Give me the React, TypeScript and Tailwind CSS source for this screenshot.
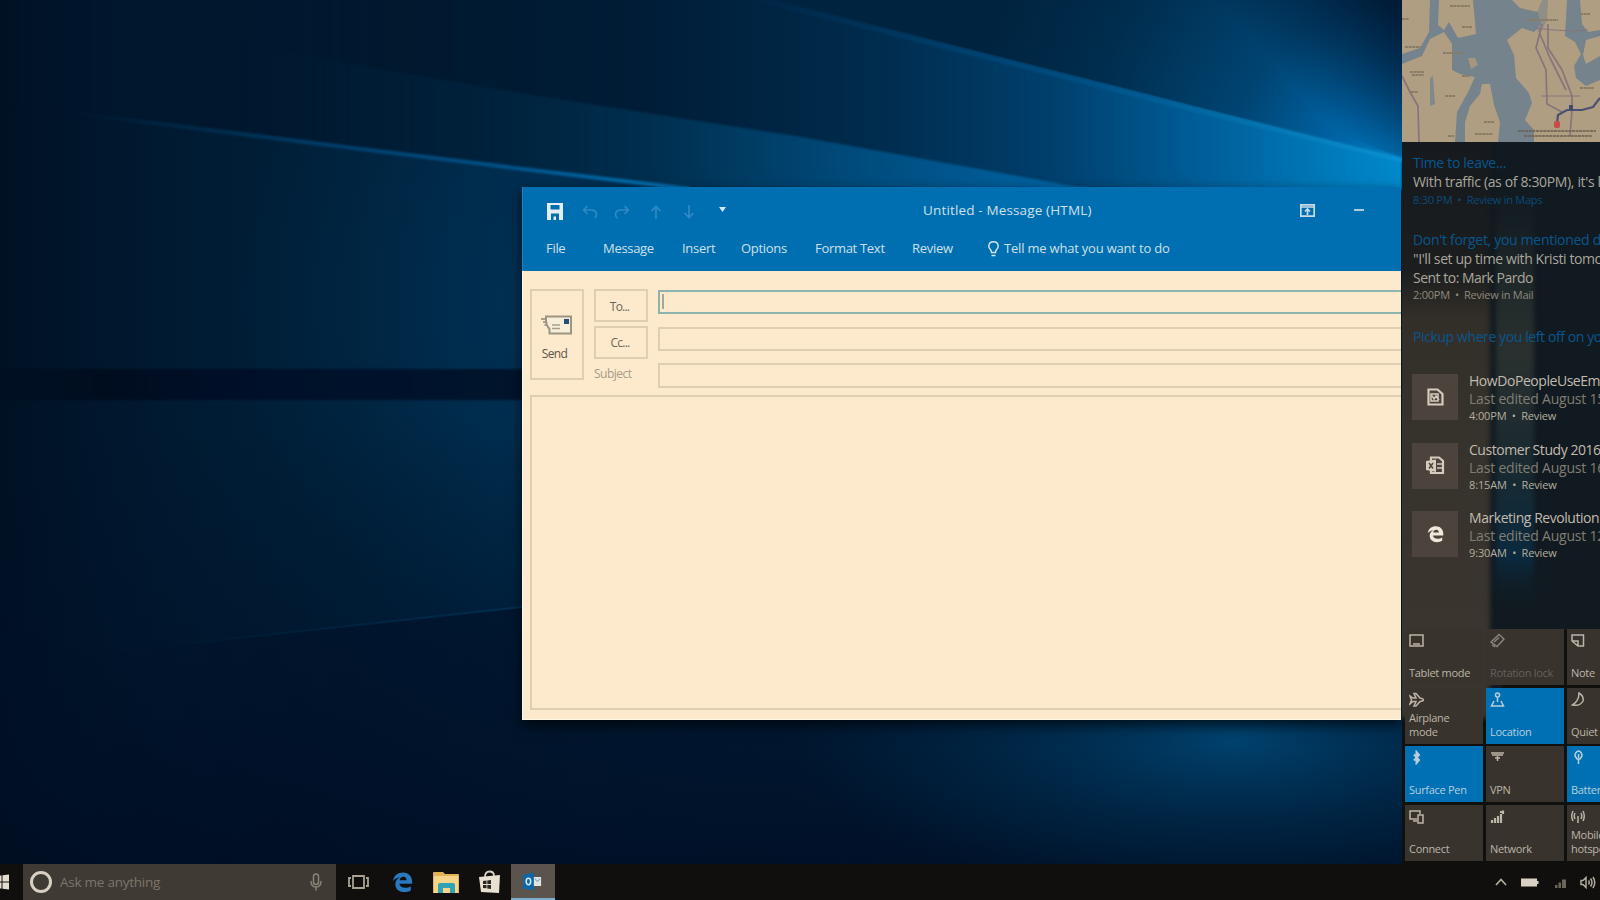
import React from 'react';
import clsx from 'clsx';

type IconProps = { className?: string };

const Wallpaper = () => (
  <svg className="absolute inset-0" width="1600" height="900" viewBox="0 0 1600 900">
    <defs>
      <linearGradient id="base" x1="0" x2="1" y1="0" y2="0">
        <stop offset="0" stopColor="#001124" />
        <stop offset="0.1" stopColor="#001a31" />
        <stop offset="0.22" stopColor="#00213b" />
        <stop offset="0.34" stopColor="#002a4a" />
        <stop offset="1" stopColor="#00213e" />
      </linearGradient>
      <radialGradient id="midGlow" gradientUnits="userSpaceOnUse" cx="560" cy="300" r="330">
        <stop offset="0" stopColor="#003c66" stopOpacity="0.4" />
        <stop offset="1" stopColor="#003c66" stopOpacity="0" />
      </radialGradient>
      <linearGradient id="upper" gradientUnits="userSpaceOnUse" x1="0" x2="1400" y1="0" y2="0">
        <stop offset="0" stopColor="#00162b" stopOpacity="0" />
        <stop offset="0.15" stopColor="#00172d" stopOpacity="0.8" />
        <stop offset="0.28" stopColor="#00192f" />
        <stop offset="0.45" stopColor="#001c36" />
        <stop offset="0.62" stopColor="#002b4c" />
        <stop offset="0.75" stopColor="#003f6c" />
        <stop offset="0.86" stopColor="#005e99" />
        <stop offset="1" stopColor="#0089cc" />
      </linearGradient>
      <linearGradient id="lower" gradientUnits="userSpaceOnUse" x1="240" x2="1080" y1="0" y2="0">
        <stop offset="0" stopColor="#001e38" stopOpacity="0" />
        <stop offset="0.3" stopColor="#00233d" stopOpacity="0.9" />
        <stop offset="0.5" stopColor="#003050" />
        <stop offset="0.72" stopColor="#004a7a" />
        <stop offset="1" stopColor="#0065a6" />
      </linearGradient>
      <radialGradient id="corner" gradientUnits="userSpaceOnUse" cx="1400" cy="175" r="430">
        <stop offset="0" stopColor="#007cc4" />
        <stop offset="0.18" stopColor="#0062a3" />
        <stop offset="0.4" stopColor="#004472" />
        <stop offset="0.75" stopColor="#002c4c" />
        <stop offset="1" stopColor="#002440" />
      </radialGradient>
      <linearGradient id="cornerShade" gradientUnits="userSpaceOnUse" x1="1310" y1="100" x2="1400" y2="15">
        <stop offset="0" stopColor="#001a35" stopOpacity="0" />
        <stop offset="1" stopColor="#001a35" stopOpacity="0.95" />
      </linearGradient>
      <linearGradient id="beamA" gradientUnits="userSpaceOnUse" x1="760" x2="1402" y1="0" y2="160">
        <stop offset="0" stopColor="#003a66" stopOpacity="0.1" />
        <stop offset="0.5" stopColor="#005084" stopOpacity="0.9" />
        <stop offset="1" stopColor="#0992d4" />
      </linearGradient>
      <linearGradient id="beamB" gradientUnits="userSpaceOnUse" x1="60" x2="690" y1="110" y2="190">
        <stop offset="0" stopColor="#003052" stopOpacity="0" />
        <stop offset="0.4" stopColor="#003c66" />
        <stop offset="0.7" stopColor="#005288" />
        <stop offset="1" stopColor="#0078ba" />
      </linearGradient>
      <linearGradient id="band" gradientUnits="userSpaceOnUse" x1="0" x2="530" y1="0" y2="0">
        <stop offset="0" stopColor="#000d1e" stopOpacity="0.3" />
        <stop offset="0.2" stopColor="#000c1e" stopOpacity="0.9" />
        <stop offset="0.5" stopColor="#00102a" />
        <stop offset="1" stopColor="#00152d" />
      </linearGradient>
      <linearGradient id="floor" gradientUnits="userSpaceOnUse" x1="0" x2="0" y1="420" y2="864">
        <stop offset="0" stopColor="#001026" stopOpacity="0" />
        <stop offset="0.6" stopColor="#000f25" stopOpacity="0.5" />
        <stop offset="1" stopColor="#000d22" stopOpacity="0.85" />
      </linearGradient>
      <linearGradient id="ray" gradientUnits="userSpaceOnUse" x1="150" x2="522" y1="0" y2="0">
        <stop offset="0" stopColor="#00304f" stopOpacity="0" />
        <stop offset="1" stopColor="#003358" stopOpacity="0.8" />
      </linearGradient>
      <linearGradient id="underRay" gradientUnits="userSpaceOnUse" x1="60" x2="1100" y1="0" y2="0">
        <stop offset="0" stopColor="#000c22" stopOpacity="0" />
        <stop offset="0.22" stopColor="#000d24" stopOpacity="0.4" />
        <stop offset="0.44" stopColor="#001026" stopOpacity="0.55" />
        <stop offset="1" stopColor="#001026" stopOpacity="0" />
      </linearGradient>
      <radialGradient id="bottomGlow">
        <stop offset="0" stopColor="#004a7a" stopOpacity="0.85" />
        <stop offset="0.45" stopColor="#003a62" stopOpacity="0.5" />
        <stop offset="1" stopColor="#003156" stopOpacity="0" />
      </radialGradient>
      <filter id="soft" x="-5%" y="-20%" width="110%" height="140%" colorInterpolationFilters="sRGB">
        <feGaussianBlur stdDeviation="1.3" />
      </filter>
    </defs>
    <rect width="1600" height="900" fill="url(#base)" />
    <rect width="1600" height="900" fill="url(#midGlow)" />
    <path d="M-10 -10H740L780 0L1402 158V190H690L523 169L353 148L153 123L-10 105Z" fill="url(#upper)" filter="url(#soft)" />
    <path d="M240 42L330 60L520 93L802 137L1084 188H690L523 169L353 148L240 133Z" fill="url(#lower)" filter="url(#soft)" />
    <path d="M775 0H1402V158Z" fill="url(#corner)" />
    <path d="M1000 0H1402V158Z" fill="url(#cornerShade)" />
    <g filter="url(#soft)" fill="none">
      <path d="M760 0L971 53L1196 110L1402 160" stroke="url(#beamA)" strokeWidth="5" />
      <path d="M60 112L153 123L353 148L523 169L690 189" stroke="url(#beamB)" strokeWidth="4" />
    </g>
    <rect x="-10" y="369" width="560" height="31" fill="url(#band)" filter="url(#soft)" />
    <rect y="420" width="1600" height="480" fill="url(#floor)" />
    <path d="M60 660L150 648L522 607L1100 560V900H60Z" fill="url(#underRay)" />
    <path d="M150 648L522 607" stroke="url(#ray)" strokeWidth="2" />
    <ellipse cx="1235" cy="740" rx="440" ry="165" fill="url(#bottomGlow)" />
  </svg>
);

const SaveIcon = () => (
  <svg width="16" height="17" viewBox="0 0 16 17" fill="#e4eef0">
    <path fillRule="evenodd" d="M0 0H16V17H0ZM3.5 2V6.5H12.5V2ZM4 10.5V17H6.5V13.5H9V17H12V10.5Z" />
  </svg>
);

const UndoIcon = ({ className }: IconProps) => (
  <svg className={className} width="16" height="14" viewBox="0 0 16 14" fill="none" stroke="#2f8ac3" strokeWidth="1.6">
    <path d="M5.5 1L1.5 5L5.5 9M2 5H10Q14.5 5.5 14.5 9.5Q14.5 12 12.5 13" />
  </svg>
);

const ArrowIcon = ({ className }: IconProps) => (
  <svg className={className} width="12" height="14" viewBox="0 0 12 14" fill="none" stroke="#2f8ac3" strokeWidth="1.7">
    <path d="M6 14V1.5M1.5 6L6 1.5L10.5 6" />
  </svg>
);

const RibbonIcon = () => (
  <svg width="15" height="13" viewBox="0 0 15 13" fill="none" stroke="#c9dde6" strokeWidth="1.7">
    <path d="M.8 .8H14.2V12.2H.8ZM.8 3H14.2M7.5 11V5.5M5 7.5L7.5 5L10 7.5" />
  </svg>
);

const BulbIcon = () => (
  <svg width="11" height="16" viewBox="0 0 11 16" fill="none" stroke="#d3e2e8" strokeWidth="1.5">
    <path d="M3.5 11.5Q3.5 9.5 2 8Q.8 6.8 .8 5.2Q1 .8 5.5 .8Q10 .8 10.2 5.2Q10.2 6.8 9 8Q7.5 9.5 7.5 11.5ZM3.5 14.5H7.5" />
  </svg>
);

const SendIcon = () => (
  <svg width="31" height="20" viewBox="0 0 31 20" fill="none">
    <path d="M5 4H0M6 7H2M7 10H3.5" stroke="#8f8775" strokeWidth="1.5" />
    <path d="M5 1.5H30V18.5H8.5V14Q5 10 5 6Z" fill="#f7eeda" stroke="#9d9582" strokeWidth="2" />
    <path d="M23 4H28V9H23Z" fill="#1f4f78" />
    <path d="M11 10H19M11 13.5H19" stroke="#a69e8b" strokeWidth="1.3" />
  </svg>
);

const ribbonTabs = [
  { label: 'File', className: 'ml-[23px] w-[57px]' },
  { label: 'Message', className: 'w-[79px]' },
  { label: 'Insert', className: 'w-[59px]' },
  { label: 'Options', className: 'w-[74px]' },
  { label: 'Format Text', className: 'w-[97px]' },
  { label: 'Review', className: 'w-[76px]' },
];

const MessageWindow = () => (
  <div className="absolute left-[522px] top-[187px] w-[879px] h-[533px] flex flex-col bg-[#fdeacd] shadow-[0_5px_12px_rgba(0,0,0,0.7)] overflow-hidden">
    <header className="h-[84px] shrink-0 bg-[#006fb1] text-[#cfe0e8] text-[13px] border-l border-[#1b80bb]">
      <div className="h-[46px] flex items-center">
        <div className="flex items-center w-[400px] pl-[24px] pt-[3px]">
          <SaveIcon />
          <UndoIcon className="ml-[19px]" />
          <UndoIcon className="ml-[16px] -scale-x-100" />
          <ArrowIcon className="ml-[20px]" />
          <ArrowIcon className="ml-[21px] rotate-180" />
          <svg className="ml-[24px] mb-[4px]" width="7" height="5" viewBox="0 0 7 5" fill="#d9e6ea">
            <path d="M0 0H7L3.5 5Z" />
          </svg>
        </div>
        <div className="w-[377px] text-[13.5px] pt-px tracking-[0.15px] whitespace-nowrap">Untitled - Message (HTML)</div>
        <div className="flex items-center">
          <RibbonIcon />
          <div className="ml-[39px] w-[10px] h-[2px] bg-[#a9cbdc]" />
        </div>
      </div>
      <nav className="h-[32px] flex items-center whitespace-nowrap">
        {ribbonTabs.map((tab) => (
          <span key={tab.label} className={clsx('shrink-0 tracking-[-0.3px]', tab.className)}>
            {tab.label}
          </span>
        ))}
        <BulbIcon />
        <span className="ml-[5px] tracking-[-0.2px]">Tell me what you want to do</span>
      </nav>
    </header>

    <div className="flex-1 flex flex-col pl-[7px] pt-[18px] pb-[9px] border-l border-b border-[#fff6e4]">
      <div className="flex h-[91px] shrink-0">
        <button className="w-[54px] border-2 border-[#dfceb2] flex flex-col items-center text-[12px] text-[#5b5549]">
          <span className="mt-[24px] mr-[2px]"><SendIcon /></span>
          <span className="mt-[10px] mr-[5px] leading-[18px] tracking-[-0.6px]">Send</span>
        </button>
        <div className="ml-[10px] w-[54px] flex flex-col text-[12px]">
          <button className="h-[33px] shrink-0 border-2 border-[#dfceb2] text-[#6b6558] tracking-[-0.8px] pt-[2px] pr-[3px]">To...</button>
          <button className="mt-[4px] h-[33px] shrink-0 border-2 border-[#dfceb2] text-[#6b6558] tracking-[-0.8px] pt-px pr-[2px]">Cc...</button>
          <span className="mt-[6px] shrink-0 leading-[18px] text-[#a69c88] tracking-[-0.5px]">Subject</span>
        </div>
        <div className="ml-[10px] flex-1 flex flex-col">
          <div className="mt-px h-[24px] shrink-0 border-2 border-r-0 border-[#8db3ae] p-[2px]">
            <div className="w-[2px] h-[15px] bg-[#a7a796]" />
          </div>
          <div className="mt-[13px] h-[24px] shrink-0 border-2 border-r-0 border-[#dfceb2]" />
          <div className="mt-[12px] h-[25px] shrink-0 border-2 border-r-0 border-[#dfceb2]" />
        </div>
      </div>
      <div className="mt-[15px] flex-1 border-2 border-r-0 border-[#dfceb2]" />
    </div>
  </div>
);

const RouteMap = () => (
  <svg className="shrink-0" width="198" height="142" viewBox="0 0 198 142">
    <rect width="198" height="142" fill="#b09e83" />
    <g fill="#75838c">
      <path d="M71 0H110L118 8L136 12L139 24L132 32L120 28L105 40L112 55L114 78L127 93L130 103L123 120L132 130V142H96L98 122L92 105L88 84L80 84L78 94L68 106L63 122V142H53L55 112L66 92L73 77L58 74L50 70L50 44L42 32L28 39L20 56L0 64V54L18 48L27 32L28 0H37L36 25L42 30L47 22L56 38L74 34Z" />
      <path d="M66 58L73 58L76 65L69 69Z" fill="#a39780" />
      <path d="M165 0H178L180 24L186 32L198 30V36L184 40L181 55L184 64L198 56V80L184 86L174 78L172 66L179 54L173 42L163 36Z" />
      <path d="M28 78L31 76L33 104L28 106Z" opacity="0.8" />
      <path d="M140 0H146L145 20L138 34L130 24Z" opacity="0.55" />
    </g>
    <g fill="none" stroke="#88747a" strokeWidth="1.7">
      <path d="M0 76L8 92L16 106L17 142" />
      <path d="M140 24L134 48L144 70L145 104L160 112" />
      <path d="M146 24L146 48L160 70L170 96L170 110L168 136" />
      <path d="M138 34L148 58L164 90" />
      <path d="M132 28L152 30L172 31L186 30M139 96H178" strokeWidth="1" />
    </g>
    <path d="M155 123L156 115L165 110L180 110L191 107L198 98" fill="none" stroke="#4c5173" strokeWidth="2.2" />
    <rect x="167" y="105" width="4" height="5" fill="#454a6c" />
    <rect x="152" y="121" width="6" height="7" rx="2" fill="#c84b45" />
    <g stroke="#8a7b65" strokeWidth="2" strokeDasharray="3 0.6">
      <path d="M48 6H68M60 27H70M3 47H19M41 53H60M60 76H68M8 72H22M10 75H22M9 92H16M43 96H53M82 122H92M73 134H91M126 20H156M178 14H188M46 136H52M178 88H192M0 19H7" />
      <path d="M116 131H194M122 136H190" stroke="#6b5e4e" strokeWidth="1.5" />
    </g>
  </svg>
);

const PanelBackdrop = () => (
  <svg className="absolute inset-0" width="198" height="864" viewBox="0 0 198 864">
    <defs>
      <linearGradient id="strip" x1="0" x2="0" y1="0" y2="1">
        <stop offset="0" stopColor="#161f24" stopOpacity="0" />
        <stop offset="0.2" stopColor="#1c2628" />
        <stop offset="0.4" stopColor="#2a302f" />
        <stop offset="0.65" stopColor="#1a2a30" />
        <stop offset="0.88" stopColor="#0b2a3e" />
        <stop offset="1" stopColor="#101d26" stopOpacity="0" />
      </linearGradient>
      <linearGradient id="wood" gradientUnits="userSpaceOnUse" x1="0" x2="0" y1="142" y2="630">
        <stop offset="0" stopColor="#161a1e" />
        <stop offset="0.26" stopColor="#1b1d1e" />
        <stop offset="0.36" stopColor="#322e28" />
        <stop offset="0.6" stopColor="#36322c" />
        <stop offset="1" stopColor="#3a352e" />
      </linearGradient>
      <filter id="haze" x="-20%" y="-5%" width="140%" height="110%" colorInterpolationFilters="sRGB">
        <feGaussianBlur stdDeviation="2.5" />
      </filter>
    </defs>
    <rect width="198" height="864" fill="#111a20" />
    <rect y="690" width="198" height="174" fill="#10110f" />
    <rect x="100" y="630" width="98" height="234" fill="#10110f" />
    <rect x="-10" y="130" width="98" height="588" fill="url(#wood)" filter="url(#haze)" />
    <rect x="94" y="175" width="38" height="435" fill="url(#strip)" filter="url(#haze)" />
  </svg>
);

const DocIcon = () => (
  <svg width="17" height="18" viewBox="0 0 17 18" fill="none" stroke="#d5ccbd" strokeWidth="2.2">
    <path d="M1.5 1.5H10.5L15.5 6V16.5H1.5Z" />
    <path d="M4 6H11V13H4ZM5 7.5L7 11L9 8L12 12" strokeWidth="1.5" />
  </svg>
);

const ExcelIcon = () => (
  <svg width="19" height="19" viewBox="0 0 19 19">
    <path d="M5 1.5H13L17 5V17H5Z" fill="none" stroke="#d5ccbd" strokeWidth="2.2" />
    <path d="M0 5L10 3.5V16L0 14Z" fill="#d5ccbd" />
    <path d="M3 7L7 12.5M7 7L3 12.5" stroke="#4d453d" strokeWidth="1.5" />
    <path d="M11 8H16M11 12H16" stroke="#d5ccbd" strokeWidth="1.5" />
  </svg>
);

const EdgeIcon = ({ className }: IconProps) => (
  <svg className={className} viewBox="0 0 24 24" fill="currentColor">
    <path d="M1 11C2 4.5 6.5 1 12.5 1C19 1 23 5.5 23 11.5V14H8.5C8.8 17 11.5 18.7 15 18.7C17.5 18.7 19.8 18 21.5 16.9V21.7C19.5 22.9 17 23.5 14 23.5C7.8 23.5 3.8 19.8 3.8 14.5C3.8 11 5.7 8.2 9 6.7C6 7 3 8.5 1 11ZM8.7 10H16.7C16.7 7.5 15.3 6 12.9 6C10.7 6 9.1 7.5 8.7 10Z" />
  </svg>
);

const recentItems = [
  { title: 'HowDoPeopleUseEmail', edited: 'Last edited August 15', time: '4:00PM', icon: <DocIcon /> },
  { title: 'Customer Study 2016', edited: 'Last edited August 16', time: '8:15AM', icon: <ExcelIcon /> },
  { title: 'Marketing Revolution', edited: 'Last edited August 12', time: '9:30AM', icon: <EdgeIcon className="w-[17px] h-[18px] text-[#efe8da]" /> },
];

const tileIcons: Record<string, React.ReactNode> = {
  tablet: <path d="M1 2H14V13H1ZM4 11H11" />,
  rotation: <path d="M1 9L9 1.5L14 6L7 13.5ZM4 9L9 4.5M5 14L2 12" />,
  note: <path d="M1 2H12.5V13H7L1 8ZM1 8H7V13" />,
  airplane: <path d="M1 4L4 6H7L5 1.5H7L11 6Q14.5 6.5 14.5 8Q14.5 9 11 9.5L7 14H5L7 9.5H4L1 12L2.5 8Z" />,
  location: <path d="M7.5 10V5M5.5 3A2 2 0 1 0 9.5 3A2 2 0 1 0 5.5 3M4 9L1.5 14H13.5L11 9" />,
  quiet: <path d="M8 1Q13 4 12 9Q9 14.5 1.5 13Q8 9 8 1Z" />,
  bluetooth: <path d="M5 4.5L10 10L7.5 13V2L10 5L5 10.5" strokeWidth="2" />,
  vpn: <path d="M1 3H14M2 5H13M5 8H10M7.5 6V11" />,
  battery: <path d="M7.5 1Q11 2 11 6L9 9H6L4 6Q4 2 7.5 1ZM7.5 9V14M7.5 4V8" />,
  connect: <path d="M8 10H1V2H11V5M9 6H14V14H9ZM4 12H8" />,
  network: <path d="M2 14V11M5 14V9M8 14V7M11 14V5M13 1.5V5M10 3H14" strokeWidth="2.2" />,
  hotspot: <path d="M7 7V14M4 4Q2.5 7 4 10M10 4Q11.5 7 10 10M2 2Q-.5 7 2 12M12 2Q14.5 7 12 12" />,
};

const quickActions = [
  { label: 'Tablet mode', icon: 'tablet' },
  { label: 'Rotation lock', icon: 'rotation', muted: true },
  { label: 'Note', icon: 'note' },
  { label: 'Airplane mode', icon: 'airplane', wrap: true },
  { label: 'Location', icon: 'location', active: true },
  { label: 'Quiet hours', icon: 'quiet' },
  { label: 'Surface Pen', icon: 'bluetooth', active: true },
  { label: 'VPN', icon: 'vpn' },
  { label: 'Battery saver', icon: 'battery', active: true },
  { label: 'Connect', icon: 'connect' },
  { label: 'Network', icon: 'network' },
  { label: 'Mobile hotspot', icon: 'hotspot', wrap: true },
];

const ActionCenter = () => (
  <aside className="absolute left-[1402px] top-0 w-[198px] h-[864px] overflow-hidden bg-[#121a20]">
    <PanelBackdrop />
    <div className="relative flex flex-col h-full whitespace-nowrap">
      <RouteMap />
      <div className="pl-[11px] pt-[11px] h-[232px] shrink-0 text-[14px] leading-[19px] text-[#aaa69c]">
        <div className="text-[#09568d] tracking-[-0.3px]">Time to leave...</div>
        <div className="tracking-[-0.35px]">With traffic (as of 8:30PM), it's longer</div>
        <div className="text-[11px] leading-[17px] text-[#0a4a7a] tracking-[-0.25px]">8:30 PM&nbsp; •&nbsp; Review in Maps</div>
        <div className="mt-[22px] text-[#09568d] tracking-[-0.3px]">Don't forget, you mentioned doing</div>
        <div className="tracking-[-0.4px]">"I'll set up time with Kristi tomorrow</div>
        <div className="tracking-[-0.5px]">Sent to: Mark Pardo</div>
        <div className="text-[11px] leading-[16px] text-[#8f897d] tracking-[-0.25px]">2:00PM&nbsp; •&nbsp; Review in Mail</div>
        <div className="mt-[24px] text-[#09568d] tracking-[-0.4px]">Pickup where you left off on your</div>
      </div>
      <div className="pl-[10px] h-[255px] shrink-0 flex flex-col gap-[23px]">
        {recentItems.map((item) => (
          <div key={item.title} className="flex h-[45.5px]">
            <div className="w-[46px] h-[46px] shrink-0 bg-[#4c443c] flex items-center justify-center">{item.icon}</div>
            <div className="ml-[11px] -mt-[3px] text-[14px] leading-[19px]">
              <div className="text-[#c2bbaf] tracking-[-0.45px]">{item.title}</div>
              <div className="text-[#827d73] leading-[18px] tracking-[-0.2px]">{item.edited}</div>
              <div className="text-[11px] leading-[16px] text-[#b5ae9f] tracking-[-0.15px]">{item.time}&nbsp; •&nbsp; Review</div>
            </div>
          </div>
        ))}
      </div>
      <div className="flex-1 w-[260px] px-[3px] grid grid-cols-[78px_78px_78px] auto-rows-[56px] gap-x-[3px] gap-y-[2.5px] content-start">
        {quickActions.map((action) => (
          <div
            key={action.label}
            className={clsx(
              'flex flex-col justify-between pl-[4px] pr-[18px] pt-[4px] pb-[5px] text-[11px] leading-[14px] tracking-[-0.3px]',
              action.active ? 'bg-[#0070b5] text-[#b8cfd8]' : 'bg-[#38332d]',
              action.muted ? 'text-[#67605a]' : !action.active && 'text-[#bdb5a7]',
            )}
          >
            <svg
              className={clsx('shrink-0', action.muted && 'text-[#8b8478]')}
              width="15"
              height="15"
              viewBox="0 0 15 15"
              fill="none"
              stroke="currentColor"
              strokeWidth="1.5"
            >
              {tileIcons[action.icon]}
            </svg>
            <span className={action.wrap ? 'whitespace-normal' : 'whitespace-nowrap'}>{action.label}</span>
          </div>
        ))}
      </div>
    </div>
  </aside>
);

const Taskbar = () => (
  <footer className="absolute left-0 top-[864px] w-[1600px] h-[36px] bg-[#100f0d] flex items-center">
    <svg className="w-[23px] shrink-0" width="23" height="36" viewBox="0 0 23 36" fill="#e3ddd0">
      <path d="M0 11.5H1.5V17.5H0ZM2.5 11.3L9 10.5V17.5H2.5ZM0 18.5H1.5V24.5H0ZM2.5 18.5H9V25.5L2.5 24.7Z" />
    </svg>
    <div className="w-[313px] h-full bg-[#403a34] flex items-center pl-[7px]">
      <div className="w-[22px] h-[22px] rounded-full border-[3px] border-[#d8d0c2]" />
      <span className="ml-[8px] w-[250px] text-[13.5px] tracking-[-0.25px] text-[#7d756a]">Ask me anything</span>
      <svg width="12" height="18" viewBox="0 0 12 18" fill="none" stroke="#8b8377" strokeWidth="1.5">
        <path d="M3.5 3.5Q3.5 1 6 1Q8.5 1 8.5 3.5V9Q8.5 11.5 6 11.5Q3.5 11.5 3.5 9ZM1 8Q1 14 6 14Q11 14 11 8M6 14V17.5" />
      </svg>
    </div>
    <svg className="ml-[12px]" width="21" height="16" viewBox="0 0 21 16" fill="none" stroke="#a9a294" strokeWidth="1.8">
      <path d="M5 2H16V14H5ZM3 4H1V12H3M18 4H20V12H18" />
    </svg>
    <EdgeIcon className="ml-[23px] w-[21px] h-[22px] text-[#2a78bd]" />
    <svg className="ml-[20px]" width="27" height="23" viewBox="0 0 27 23">
      <path d="M0 2Q0 1 1 1H10L12 3H25Q26 3 26 4V22H0Z" fill="#e2b354" />
      <path d="M1 5H25V22H1Z" fill="#f4d58a" />
      <path d="M5 22V14Q5 12 7 12H20Q22 12 22 14V22H17V17H10V22Z" fill="#2fa3b5" />
    </svg>
    <svg className="ml-[19px]" width="22" height="24" viewBox="0 0 22 24">
      <path d="M6 7Q6 1.5 10.5 1.5Q15 1.5 15 6" fill="none" stroke="#d8d1c3" strokeWidth="1.8" />
      <path d="M0 7L21 5L20 23L2 22Z" fill="#e8e1d2" />
      <path d="M4 11L7.5 10.6V14H4ZM8.3 10.5L12 10V14H8.3ZM4 15H7.5V18.3L4 18ZM8.3 15H12V19L8.3 18.5Z" fill="#2a2722" />
    </svg>
    <div className="ml-[10px] w-[44px] h-full bg-[#5a544d] border-b-2 border-[#78aed0] flex items-center justify-center">
      <svg className="mr-px" width="19" height="19" viewBox="0 0 21 20">
        <path d="M11 5H20V15H11Z" fill="#e3e4df" />
        <path d="M13 7L16 10L19 7" fill="none" stroke="#8fb0c6" strokeWidth="1.3" />
        <path d="M0 2.5L12 0V20L0 17.5Z" fill="#0d66a8" />
        <ellipse cx="6" cy="10" rx="2.5" ry="3.5" fill="none" stroke="#dce6ea" strokeWidth="1.7" />
      </svg>
    </div>
    <div className="ml-auto flex items-center">
      <svg width="12" height="8" viewBox="0 0 12 8" fill="none" stroke="#b3ac9f" strokeWidth="1.7">
        <path d="M1 7L6 1.5L11 7" />
      </svg>
      <svg className="ml-[14px]" width="18" height="9" viewBox="0 0 18 9" fill="#d9d2c4">
        <path d="M0 .5H16V8.5H0ZM16 3H17.5V6H16Z" />
      </svg>
      <svg className="ml-[16px]" width="12" height="11" viewBox="0 0 12 11" fill="#6b655b">
        <path d="M0 8H2.5V11H0ZM3.5 5.5H6V11H3.5ZM7 2.5H11V11H7Z" />
      </svg>
      <svg className="ml-[13px] mr-[4px]" width="16" height="13" viewBox="0 0 16 13" fill="none" stroke="#b3ac9f" strokeWidth="1.5">
        <path d="M1 4.5H3L6 1.5V11.5L3 8.5H1ZM8.5 4.5Q10 6.5 8.5 8.5M10.5 2.5Q13.5 6.5 10.5 10.5M13 1Q16.5 6.5 13 12" />
      </svg>
    </div>
  </footer>
);

export default function App() {
  return (
    <div className="relative w-[1600px] h-[900px] overflow-hidden bg-[#001429] font-['Open_Sans','Noto_Sans',sans-serif]">
      <Wallpaper />
      <MessageWindow />
      <ActionCenter />
      <Taskbar />
    </div>
  );
}
